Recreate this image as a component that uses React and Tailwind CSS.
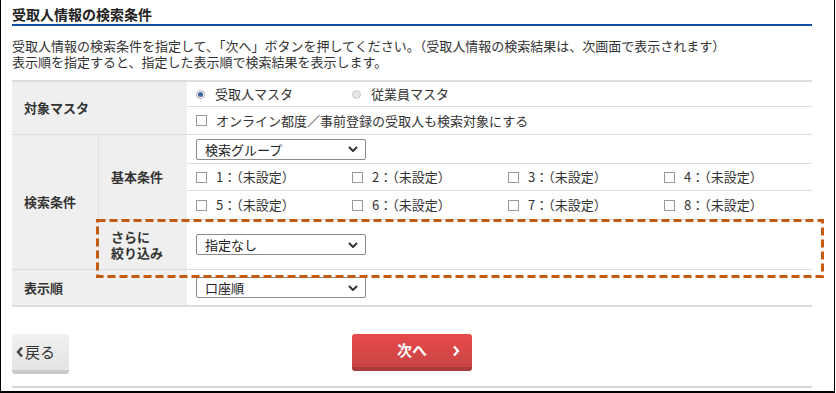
import React from "react";

const jp = "font-['Noto_Sans_CJK_JP','Noto_Sans',sans-serif]";

function Chevron({ className = "" }) {
    return (
        <svg width="10" height="6" viewBox="0 0 10 6" className={className}>
            <polyline points="1,1 5,5 9,1" fill="none" stroke="#333" strokeWidth="2" />
        </svg>
    );
}

function Select({ label }) {
    return (
        <div className="w-[170px] h-[21px] border border-[#8a8a8a] rounded-[2px] bg-white flex items-center justify-between pl-[8px] pr-[7px] text-[13px] leading-[19px] text-[#222]">
            <span>{label}</span>
            <Chevron />
        </div>
    );
}

function Checkbox({ label }) {
    return (
        <div className="flex items-center">
            <span className="w-[11px] h-[11px] border border-[#9a9a9a] bg-white" />
            <span className="ml-[9px] text-[13px] text-[#333]">{label}</span>
        </div>
    );
}

function Radio({ label, checked }) {
    return (
        <div className="flex items-center">
            {checked ? (
                <span className="w-[9px] h-[9px] rounded-full border border-[#a9a9a9] bg-white flex items-center justify-center">
                    <span className="w-[5px] h-[5px] rounded-full bg-[#3f64a0]" />
                </span>
            ) : (
                <span className="w-[9px] h-[9px] rounded-full border border-[#c8c8c8] bg-[#e6e6e6]" />
            )}
            <span className="ml-[10px] text-[13px] text-[#333]">{label}</span>
        </div>
    );
}

const label = "bg-[#efefef] border-b border-[#dddddd] flex items-center pl-[12px] text-[13px] font-bold text-[#333] leading-[16px]";
const value = "border-b border-[#dddddd] flex items-center pl-[9px]";

export default function App() {
    const groups = ["1", "2", "3", "4", "5", "6", "7", "8"];

    return (
        <div className={`${jp} w-[835px] h-[393px] bg-white border-l border-r border-b-2 border-black pl-[11px]`}>
            <div className="w-[800px]">
                {/* Title */}
                <h1 className="pt-[5px] pb-[1px] text-[14px] leading-[18px] font-bold text-[#222] border-b-2 border-[#0d4fa3]">
                    受取人情報の検索条件
                </h1>
                <p className="mt-[12px] text-[13px] leading-[16px] text-[#333]">
                    受取人情報の検索条件を指定して、「次へ」ボタンを押してください。（受取人情報の検索結果は、次画面で表示されます）
                    <br />
                    表示順を指定すると、指定した表示順で検索結果を表示します。
                </p>

                {/* Condition table */}
                <div className="relative mt-[10px] border-t-2 border-b-2 border-[#dddddd] grid grid-cols-[87px_88px_625px] grid-rows-[25px_28px_29px_27px_29px_50px_35px]">
                    <div className={`${label} col-span-2 row-span-2`}>対象マスタ</div>
                    <div className={value}>
                        <div className="grid grid-cols-[156px_156px]">
                            <Radio label="受取人マスタ" checked />
                            <Radio label="従業員マスタ" />
                        </div>
                    </div>
                    <div className={value}>
                        <Checkbox label="オンライン都度／事前登録の受取人も検索対象にする" />
                    </div>

                    <div className={`${label} row-span-4 border-r border-r-[#e2e2e2]`}>検索条件</div>
                    <div className={`${label} row-span-3`}>基本条件</div>
                    <div className={value}>
                        <Select label="検索グループ" />
                    </div>
                    <div className={value}>
                        <div className="grid grid-cols-[156px_156px_156px_156px]">
                            {groups.slice(0, 4).map((g) => (
                                <Checkbox key={g} label={`${g}：（未設定）`} />
                            ))}
                        </div>
                    </div>
                    <div className={value}>
                        <div className="grid grid-cols-[156px_156px_156px_156px]">
                            {groups.slice(4).map((g) => (
                                <Checkbox key={g} label={`${g}：（未設定）`} />
                            ))}
                        </div>
                    </div>
                    <div className={label}>
                        <span>
                            さらに
                            <br />
                            絞り込み
                        </span>
                    </div>
                    <div className={value}>
                        <Select label="指定なし" />
                    </div>

                    <div className={`${label} col-span-2 border-b-0`}>表示順</div>
                    <div className={`${value} border-b-0`}>
                        <Select label="口座順" />
                    </div>

                    {/* highlight annotation */}
                    <svg width="728" height="59" className="absolute left-[84px] top-[137px] pointer-events-none">
                        <rect x="1.5" y="1.5" width="725" height="56" fill="none" stroke="#c55a11" strokeWidth="3" strokeDasharray="8 4" />
                    </svg>
                </div>

                {/* Buttons */}
                <div className="mt-[27px] grid grid-cols-[1fr_120px_1fr] items-start">
                    <button className="justify-self-start w-[57px] h-[40px] rounded-[3px] bg-gradient-to-b from-[#f1f1f1] to-[#e4e4e4] border-b-[4px] border-[#c9c9c9] flex items-center pl-[4px] text-[15px] text-[#333]">
                        <svg width="8" height="12" viewBox="0 0 8 12" className="mr-[1px]">
                            <polyline points="6,1.5 2,6 6,10.5" fill="none" stroke="#444" strokeWidth="2.4" />
                        </svg>
                        戻る
                    </button>
                    <button className="w-[120px] h-[37px] rounded-[3px] bg-gradient-to-b from-[#e84a4a] to-[#c94444] border-b-[4px] border-[#a83a3a] relative flex items-center justify-center text-[15px] font-bold text-white">
                        次へ
                        <svg width="8" height="12" viewBox="0 0 8 12" className="absolute right-[12px] top-[11px]">
                            <polyline points="2,1.5 6,6 2,10.5" fill="none" stroke="#fff" strokeWidth="2.4" />
                        </svg>
                    </button>
                    <div />
                </div>

                <div className="mt-[12px] border-b-2 border-[#d6d6d6]" />
            </div>
        </div>
    );
}
